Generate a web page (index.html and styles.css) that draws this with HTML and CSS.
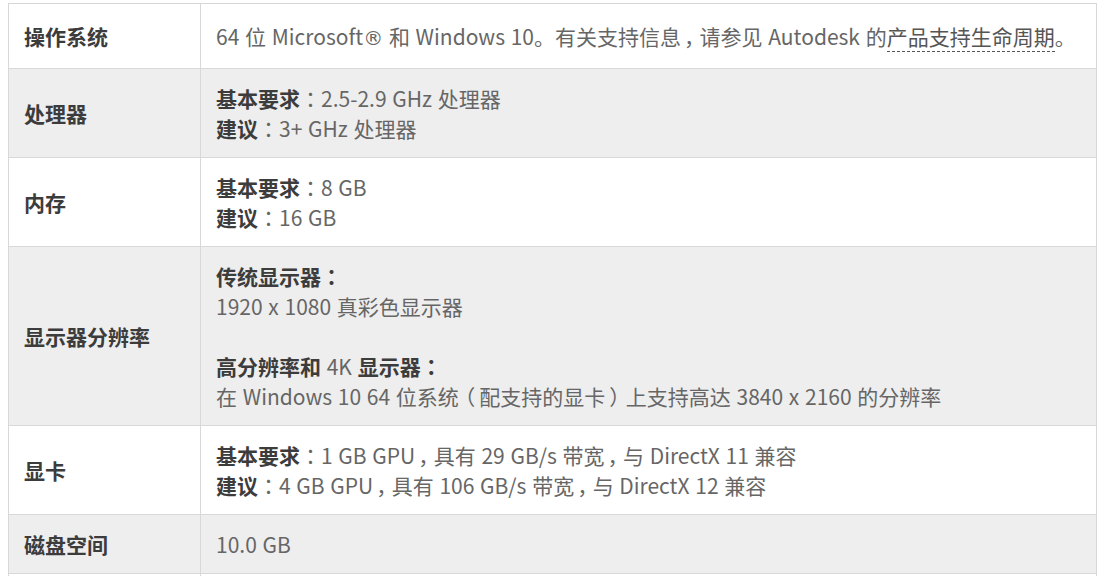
FILE: index.html
```html
<!DOCTYPE html>
<html lang="zh-CN">
<head>
<meta charset="utf-8">
<title>系统要求</title>
<link rel="stylesheet" href="styles.css">
</head>
<body>
<div class="page">
  <table class="spec">
    <colgroup><col class="col-label"><col class="col-value"></colgroup>
    <tbody>
      <tr class="row row-white">
        <th class="label label-single">操作系统</th>
        <td class="value value-single">64 位 Microsoft<span class="reg">®</span> 和 Windows 10。有关支持信息<span class="cm">，</span>请参见 Autodesk 的<a class="link" href="#">产品支持生命周期</a>。</td>
      </tr>
      <tr class="row row-gray">
        <th class="label">处理器</th>
        <td class="value"><b class="key">基本要求</b><span class="pc" lang="zh-TW">：</span>2.5-2.9 GHz 处理器<br><b class="key">建议</b><span class="pc" lang="zh-TW">：</span>3+ GHz 处理器</td>
      </tr>
      <tr class="row row-white">
        <th class="label">内存</th>
        <td class="value"><b class="key">基本要求</b><span class="pc" lang="zh-TW">：</span>8 GB<br><b class="key">建议</b><span class="pc" lang="zh-TW">：</span>16 GB</td>
      </tr>
      <tr class="row row-gray">
        <th class="label">显示器分辨率</th>
        <td class="value"><b class="key">传统显示器<span class="pc pc-bold" lang="zh-TW">：</span></b><br>1920 x 1080 真彩色显示器<br><br><b class="key">高分辨率和</b> 4K <b class="key">显示器<span class="pc pc-bold" lang="zh-TW">：</span></b><br>在 Windows 10 64 位系统<span class="po">（</span>配支持的显卡<span class="pe">）</span>上支持高达 3840 x 2160 的分辨率</td>
      </tr>
      <tr class="row row-white">
        <th class="label">显卡</th>
        <td class="value"><b class="key">基本要求</b><span class="pc" lang="zh-TW">：</span>1 GB GPU<span class="cm">，</span>具有 29 GB/s 带宽<span class="cm">，</span>与 DirectX 11 兼容<br><b class="key">建议</b><span class="pc" lang="zh-TW">：</span>4 GB GPU<span class="cm">，</span>具有 106 GB/s 带宽<span class="cm">，</span>与 DirectX 12 兼容</td>
      </tr>
      <tr class="row row-gray">
        <th class="label">磁盘空间</th>
        <td class="value">10.0 GB</td>
      </tr>
      <tr class="row row-white">
        <th class="label">&nbsp;</th>
        <td class="value">&nbsp;</td>
      </tr>
    </tbody>
  </table>
</div>
</body>
</html>
```

FILE: styles.css
```css
html, body {
  margin: 0;
  padding: 0;
  background: #ffffff;
}

.page {
  padding: 3px 9px 0 8px;
  font-family: "Noto Sans CJK SC", "Noto Sans", sans-serif;
  font-size: 21px;
  line-height: 30px;
  word-spacing: 1px;
  color: #666666;
}

.spec {
  width: 1089px;
  border-collapse: collapse;
  table-layout: fixed;
}

.col-label { width: 192px; }

.row-white { background: #ffffff; }
.row-gray { background: #eeeeee; }

.label,
.value {
  border: 1px solid #d8d8d8;
  padding: 14px 15px 14px 15px;
  vertical-align: middle;
  white-space: nowrap;
}

.label {
  text-align: left;
  font-weight: 700;
  color: #3c3c3c;
  word-spacing: 0;
}

.label-single,
.value-single {
  padding-top: 17px;
  padding-bottom: 17px;
}

.key {
  font-weight: 700;
  color: #3c3c3c;
}

.pc {
  font-family: "Noto Sans CJK TC", "Noto Sans CJK SC", sans-serif;
  font-weight: 400;
  line-height: 1;
  color: #666666;
}

.pc-bold {
  font-weight: 700;
  color: #3c3c3c;
}

.cm,
.po,
.pe {
  font-feature-settings: "halt" 1;
}

.cm {
  padding: 0 5px 0 3px;
}

.po {
  padding: 0 4px 0 6px;
}

.pe {
  padding: 0 6px 0 4px;
}

.reg {
  font-family: "DejaVu Sans", sans-serif;
  font-size: 20px;
  line-height: 1;
}

.link {
  color: #555555;
  text-decoration: none;
  border-bottom: 1px dashed #555555;
}
```
